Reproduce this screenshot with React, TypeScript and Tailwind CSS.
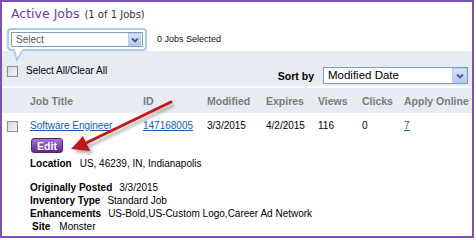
import React from "react";

function Checkbox() {
  return (
    <div className="w-[11px] h-[11px] border border-[#8c8c8c] bg-linear-to-br from-[#d6d6d6] to-[#f4f4f4] shrink-0" />
  );
}

function DropArrow({ className }: { className: string }) {
  return (
    <div className={"flex items-center justify-center border border-[#b9caee] bg-linear-to-b from-[#d9e4fb] to-[#b3c8f2] " + className}>
      <svg width="8" height="6" viewBox="0 0 8 6">
        <path d="M1 1.5 L4 4.5 L7 1.5" fill="none" stroke="#4a5d86" strokeWidth="1.8" />
      </svg>
    </div>
  );
}

export default function App() {
  const cols = ["w-[113px]", "w-[64px]", "w-[59px]", "w-[52px]", "w-[44px]", "w-[42px]"];
  return (
    <div className="relative w-[474px] h-[238px] border-2 border-[#7b52b3] bg-white overflow-hidden font-['Liberation_Sans',Arial,sans-serif] text-black">
      {/* Title */}
      <div className="pt-[5px] pl-[9px] flex items-baseline h-[19px]">
        <span className="font-['DejaVu_Sans',Verdana,sans-serif] text-[12.5px] leading-[14px] text-[#6a3d9a]">Active Jobs</span>
        <span className="ml-[5px] font-['DejaVu_Sans',Verdana,sans-serif] text-[10px] leading-[14px] text-[#333]">(1 of 1 Jobs)</span>
      </div>

      {/* Bubble row */}
      <div className="mt-[7px] flex items-center h-[23px]">
        <div className="relative ml-[5px] w-[140px] h-[23px] rounded-[4px] border-2 border-[#a9c8ec] bg-white p-[2px]">
          <div className="h-full flex items-center border border-[#7f9db9] bg-white">
            <span className="flex-1 pl-[4px] text-[10px] leading-[12px] text-[#5a5a5a]">Select</span>
            <DropArrow className="w-[13px] h-[13px] mr-[1px]" />
          </div>
          <svg className="absolute left-[3px] top-[19px] z-10" width="14" height="14" viewBox="0 0 14 14">
            <polygon points="2,0 11,0 5,11" fill="white" stroke="#a9c8ec" strokeWidth="1.6" />
            <rect x="3" y="0" width="7" height="2" fill="white" />
          </svg>
        </div>
        <span className="ml-[10px] text-[9px] leading-[11px] text-[#111]">0 Jobs Selected</span>
      </div>

      {/* Band 1 */}
      <div className="h-[35px] bg-[#e7ecf3] flex justify-between">
        <div className="pl-[5px] pt-[15px] flex items-start gap-[8px]">
          <Checkbox />
          <span className="text-[10px] leading-[11px] mt-[-1px]">Select All/Clear All</span>
        </div>
        <div className="pt-[16px] pr-[4px] flex items-center h-[33px]">
          <span className="font-bold text-[10.5px] leading-[12px] mr-[9px]">Sort by</span>
          <div className="w-[145px] h-[17px] flex items-center border border-[#7f9db9] bg-white">
            <span className="flex-1 pl-[4px] text-[11.5px] leading-[13px]">Modified Date</span>
            <DropArrow className="w-[15px] h-[15px]" />
          </div>
        </div>
      </div>
      <div className="h-[2px] bg-white" />

      {/* Header band */}
      <div className="h-[25px] bg-[#e7ecf3] flex items-center pl-[28px] text-[10.5px] leading-[12px] font-bold text-[#7a7a7a]">
        <span className={cols[0]}>Job Title</span>
        <span className={cols[1]}>ID</span>
        <span className={cols[2]}>Modified</span>
        <span className={cols[3]}>Expires</span>
        <span className={cols[4]}>Views</span>
        <span className={cols[5]}>Clicks</span>
        <span>Apply Online</span>
      </div>

      {/* Row */}
      <div className="px-[5px] pt-[7px] text-[10px]">
        <div className="flex leading-[12px]">
          <div className="w-[23px] pt-[1px]">
            <Checkbox />
          </div>
          <span className={cols[0]}>
            <span className="text-[#1a5ba6] underline">Software Engineer</span>
          </span>
          <span className={cols[1]}>
            <span className="text-[#1a5ba6] underline">147168005</span>
          </span>
          <span className={cols[2]}>3/3/2015</span>
          <span className={cols[3]}>4/2/2015</span>
          <span className={cols[4]}>116</span>
          <span className={cols[5]}>0</span>
          <span className="text-[#1a5ba6] underline">7</span>
        </div>
        <div className="mt-[6px] ml-[24px] w-[32px] h-[15px] rounded-[3px] border border-[#4b2377] bg-linear-to-b from-[#a47ad6] to-[#5a2a8c] flex items-center justify-center text-white font-bold text-[10.5px] leading-[12px]">
          Edit
        </div>
        <div className="mt-[4px] ml-[23px] leading-[13px]">
          <span className="font-bold">Location</span>
          <span className="ml-[8px]">US, 46239, IN, Indianapolis</span>
        </div>
        <div className="mt-[11px] ml-[23px] leading-[13px]">
          <div>
            <span className="font-bold mr-[7px]">Originally Posted</span>
            <span>3/3/2015</span>
          </div>
          <div>
            <span className="font-bold mr-[7px]">Inventory Type</span>
            <span>Standard Job</span>
          </div>
          <div>
            <span className="font-bold mr-[7px]">Enhancements</span>
            <span>US-Bold,US-Custom Logo,Career Ad Network</span>
          </div>
          <div className="ml-[2px]">
            <span className="font-bold mr-[9px]">Site</span>
            <span>Monster</span>
          </div>
        </div>
      </div>

      {/* Red arrow overlay */}
      <svg className="absolute left-[-2px] top-[-2px] pointer-events-none" width="476" height="240" viewBox="0 0 476 240">
        <defs>
          <filter id="blur" x="-20%" y="-20%" width="140%" height="140%">
            <feGaussianBlur stdDeviation="1.5" />
          </filter>
        </defs>
        <g opacity="0.45" filter="url(#blur)" transform="translate(3 3)">
          <line x1="171" y1="102" x2="86" y2="143" stroke="#555" strokeWidth="3" />
          <polygon points="71,149 83,136 90,151" fill="#555" />
        </g>
        <line x1="171" y1="102" x2="86" y2="143" stroke="#c3161c" strokeWidth="3" strokeLinecap="round" />
        <polygon points="71,149 83,136 90,151" fill="#c3161c" />
      </svg>
    </div>
  );
}
